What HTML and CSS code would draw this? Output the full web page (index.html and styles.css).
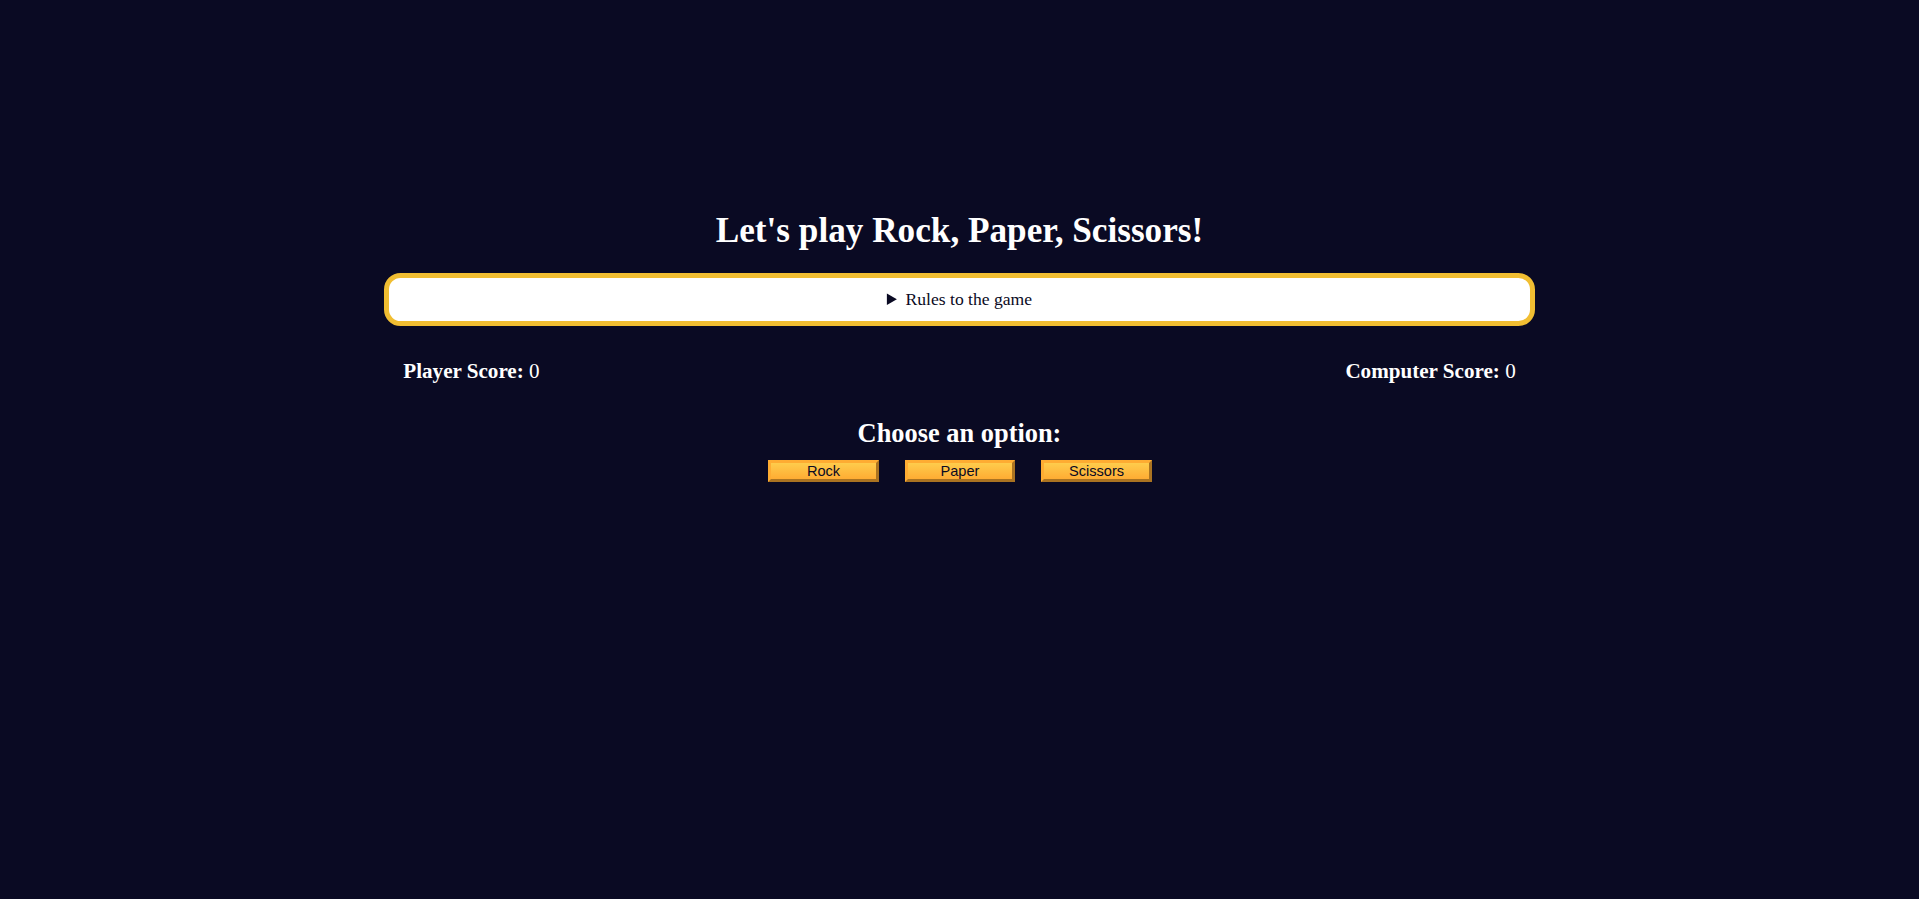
FILE: index.html
```html
<!DOCTYPE html>
<html lang="en">
<head>
<meta charset="utf-8">
<title>Rock, Paper, Scissors</title>
<link rel="stylesheet" href="styles.css">
</head>
<body>
<main class="page">
  <h1 class="title">Let's play Rock, Paper, Scissors!</h1>
  <details class="rules">
    <summary>Rules to the game</summary>
    <p>You will be playing against the computer.</p>
    <p>You can choose between Rock, Paper, and Scissors.</p>
    <p>The first one to three points wins.</p>
  </details>
  <div class="scores">
    <p class="score-line"><strong>Player Score:</strong> <span class="score">0</span></p>
    <p class="score-line"><strong>Computer Score:</strong> <span class="score">0</span></p>
  </div>
  <section class="options">
    <h2 class="options-title">Choose an option:</h2>
    <div class="btns">
      <button class="btn" type="button">Rock</button>
      <button class="btn" type="button">Paper</button>
      <button class="btn" type="button">Scissors</button>
    </div>
  </section>
</main>
</body>
</html>
```
FILE: styles.css
```css
* {
  margin: 0;
  padding: 0;
  box-sizing: border-box;
}

html, body {
  background-color: #0a0a23;
}

body {
  min-height: 100vh;
  color: #ffffff;
  font-family: "Liberation Serif", "Times New Roman", serif;
  font-size: 17.6px;
  text-align: center;
}

.page {
  padding-top: 194.5px;
}

.title {
  font-size: 35.2px;
  font-weight: bold;
  line-height: normal;
  margin: 16.5px 0 22px;
}

.rules {
  width: 60%;
  margin: 0 auto;
  padding: 11px 0;
  border: 5.5px solid #f1be32;
  border-radius: 16.5px;
  background-color: #ffffff;
  color: #0a0a23;
}

.rules summary {
  cursor: pointer;
}

.rules p {
  margin: 11px 0;
}

.scores {
  width: 60%;
  margin: 33px auto 34px;
  padding: 0 19.5px;
  display: flex;
  justify-content: space-between;
  font-size: 21.1px;
}

.score {
  font-weight: normal;
}

.options-title {
  font-size: 26.4px;
  font-weight: bold;
  line-height: normal;
}

.btns {
  display: flex;
  justify-content: center;
  gap: 26px;
  margin-top: 10.5px;
  padding-left: 1px;
}

.btn {
  cursor: pointer;
  width: 110.5px;
  height: 22px;
  font-family: "Liberation Sans", Arial, sans-serif;
  font-size: 14.6px;
  line-height: 16px;
  color: #0a0a23;
  background-color: #feac32;
  background-image: linear-gradient(#fecc4c, #ffac33);
  border: 3px outset #feac32;
}
```
